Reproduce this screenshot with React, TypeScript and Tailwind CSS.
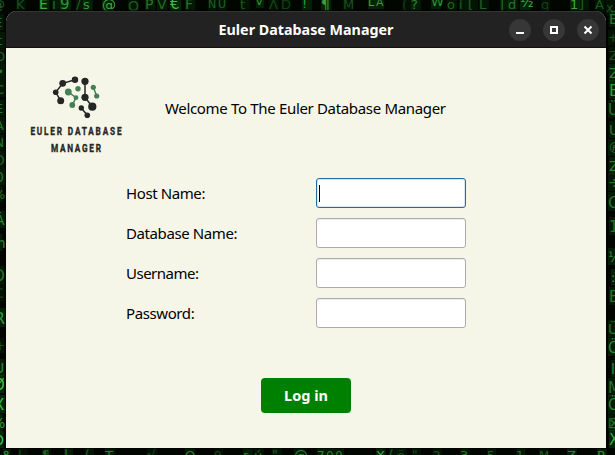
const wallpaper: [number, number, string, number, number][] = [
  // x, baseline, glyph, size, opacity
  [-8, 9, '@', 13, 0.5], [16, 9, 'K', 13, 0.4], [39, 9, 'E', 14, 0.95], [52, 9, 'i', 14, 0.55], [60, 9, '9', 15, 0.8],
  [76, 9, '/', 13, 0.5], [83, 9, 's', 13, 0.8], [102, 10, '@', 14, 0.9], [128, 11, 'O', 14, 0.45], [145, 9, 'P', 14, 0.6],
  [157, 9, 'V', 14, 0.55], [170, 9, '€', 15, 1], [185, 9, 'F', 14, 0.6], [208, 8, 'N', 11, 0.5], [218, 8, 'U', 11, 0.5], [240, 9, 't', 13, 0.45],
  [256, 5, 'v', 11, 0.8], [269, 9, 'Λ', 13, 0.35], [281, 9, 'D', 13, 0.3], [302, 8, '!', 13, 0.8], [321, 9, '¶', 14, 0.85], [343, 9, 'M', 13, 0.4],
  [368, 6, 'L', 11, 0.9], [376, 6, 'Ä', 11, 0.8], [402, 10, '(', 14, 0.3], [411, 9, '?', 13, 0.7], [431, 6, 'W', 13, 0.75], [447, 9, 'o', 13, 0.5],
  [459, 9, 'í', 13, 0.5], [468, 9, '[', 13, 0.5], [479, 9, 'L', 13, 0.5], [500, 9, '|', 13, 0.6], [508, 9, 'd', 13, 0.6], [520, 7, '½', 14, 0.9],
  [541, 9, 'q', 13, 0.3], [570, 9, '1', 13, 0.9], [579, 9, ']', 13, 0.5], [595, 9, 'Ã', 13, 0.45], [606, 12, 'x', 13, 0.4],
  [-6, 27, 'E', 13, 0.6], [-3, 45, 't', 13, 0.6], [-5, 61, 'O', 13, 0.5], [-3, 76, '•', 12, 0.6], [-4, 94, 'c', 15, 0.5], [-5, 113, 'E', 13, 0.6],
  [-5, 130, 'A', 13, 0.6], [-5, 147, 'N', 12, 0.6], [-6, 165, 'D', 14, 0.5], [-5, 182, '0', 14, 0.6], [-7, 199, '%', 13, 0.6], [-5, 225, 'Á', 14, 0.7],
  [-8, 248, 'm', 14, 0.7], [-7, 281, 'O', 15, 0.6], [-6, 298, 'C', 14, 0.3], [-6, 324, 'R', 16, 0.8], [-5, 350, '+', 12, 0.4], [-6, 373, 'U', 14, 0.7],
  [-7, 390, 'Ø', 15, 1], [-6, 410, 'X', 15, 1], [-8, 428, '%', 14, 0.8], [-7, 445, 'O', 14, 1],
  [609, 24, 'Ë', 14, 0.6], [608, 42, '+', 12, 0.4], [609, 60, 'Z', 13, 0.4], [609, 78, 'Z', 14, 0.7], [609, 96, 'E', 16, 0.8], [608, 115, 'Ü', 15, 0.6],
  [609, 135, 'U', 14, 0.6], [608, 153, '®', 14, 0.6], [609, 171, 'Z', 14, 0.7], [608, 188, '÷', 15, 0.6], [608, 208, 'Q', 16, 0.6], [609, 232, '1', 15, 0.6],
  [608, 262, '½', 14, 0.7], [611, 282, ':', 13, 0.8], [609, 302, 'E', 15, 0.6], [608, 334, 'Ü', 14, 0.6], [608, 353, 'Ö', 15, 0.7], [611, 374, 'l', 14, 0.7],
  [608, 393, 'M', 15, 0.6], [608, 410, 'Ö', 15, 0.7], [608, 428, '⊠', 15, 0.6], [609, 445, 'X', 15, 0.9],
  [3, 459, '8', 10, 0.8], [18, 460, 'l', 13, 0.35], [42, 459, '¶', 12, 0.5], [64, 459, '|', 12, 0.7], [85, 459, '(', 12, 0.5], [105, 460, 'T', 13, 0.7],
  [147, 460, '√', 14, 0.4], [185, 460, 'Q', 13, 0.65], [214, 460, '9', 12, 0.35], [243, 460, 'r', 13, 0.7], [254, 460, 'ú', 13, 0.5], [272, 459, '"', 13, 0.5],
  [294, 461, '@', 14, 0.7], [317, 460, '7', 12, 0.7], [326, 460, '0', 12, 0.65], [335, 460, '0', 12, 0.65], [376, 460, 'X', 13, 0.9], [389, 459, '(', 12, 0.5],
  [397, 460, 'ö', 13, 0.4], [412, 459, '"', 12, 0.4], [433, 460, '2', 12, 0.45], [460, 460, '3', 13, 0.6], [487, 460, '5', 12, 0.5], [516, 460, '1', 12, 0.6],
  [539, 460, 'M', 12, 0.45], [567, 460, 'Z', 13, 0.7], [597, 460, 'P', 13, 0.75],
];

function Wallpaper() {
  return (
    <svg className="absolute inset-0 h-[455px] w-[615px]" viewBox="0 0 615 455" aria-hidden="true">
      <rect width="615" height="455" fill="#010601" />
      {wallpaper.map(([x, y, glyph, size, opacity], i) => (
        <g key={i} fontFamily="'DejaVu Sans', sans-serif" fontSize={size} fill="#3cbc44" opacity={opacity}>
          <rect x={x} y={y - size} width={size * 0.75} height={size + 3} fill="#0c5a16" opacity="0.4" />
          <text x={x} y={y}>{glyph}</text>
        </g>
      ))}
    </svg>
  );
}

function Logo() {
  const dark = [
    [75, 79.7, 3.2], [62.7, 83.3, 3.4], [55.7, 92.3, 2.8], [60.7, 100.7, 3.5], [85, 81.3, 3.6],
    [85, 97.3, 3.6], [92.3, 106.7, 4.1], [81.3, 108, 2.7], [87.3, 115.3, 2.8],
  ];
  const green = [
    [68.3, 92, 3.4], [76, 97.7, 2.4], [72.3, 105, 2.9], [78, 88.7, 2.7], [93.3, 87.3, 2.6], [96.7, 96, 2.6],
  ];
  return (
    <svg className="ml-5 mt-[22px] h-[90px] w-[104px] shrink-0" viewBox="26 70 104 90">
      <g fill="none" strokeWidth="1.5">
        <path d="M75 79.7 62.7 83.3 55.7 92.3 60.7 100.7M85 81.3V97.3L92.3 106.7M81.3 108 87.3 115.3" stroke="#252726" />
        <path d="M68.3 92 76 97.7 72.3 105M93.3 87.3 96.7 96" stroke="#428057" />
      </g>
      {dark.map(([x, y, r]) => <circle key={`${x}-${y}`} cx={x} cy={y} r={r} fill="#252726" />)}
      {green.map(([x, y, r]) => <circle key={`${x}-${y}`} cx={x} cy={y} r={r} fill="#428057" />)}
      <g fontFamily="Roboto, sans-serif" fontWeight="700" fontSize="11.2" fill="#252726" stroke="#252726" strokeWidth="0.35" letterSpacing="2">
        <text transform="translate(30.4 135.3) scale(.735 1)" textLength="126">EULER DATABASE</text>
        <text transform="translate(51 152) scale(.735 1)" textLength="70">MANAGER</text>
      </g>
    </svg>
  );
}

function TitleButton({ kind }: { kind: 'minimize' | 'maximize' | 'close' }) {
  return (
    <button aria-label={kind} className="size-[22px] rounded-full bg-[#373737]">
      <svg viewBox="0 0 22 22" className="size-[22px]" fill="none" stroke="#fff" strokeWidth="2">
        {kind === 'minimize' && <path d="M7 14h8" />}
        {kind === 'maximize' && <rect x="8" y="8" width="6" height="6" />}
        {kind === 'close' && <path d="m7.5 7.5 7 7m0-7-7 7" />}
      </svg>
    </button>
  );
}

const fields = [
  { label: 'Host Name:', tracking: 'tracking-[-0.4px]' },
  { label: 'Database Name:', tracking: 'tracking-[-0.4px]' },
  { label: 'Username:', tracking: 'tracking-[-0.5px]' },
  { label: 'Password:', tracking: 'tracking-[-0.4px]' },
];

export default function App() {
  return (
    <div className="relative h-[455px] w-[615px] overflow-hidden bg-black font-['Noto_Sans','Open_Sans',sans-serif] text-[15px] text-black">
      <Wallpaper />
      <main className="absolute left-[6px] top-[11px] flex h-[437px] w-[600px] flex-col overflow-hidden rounded-t-[11px] bg-[#f6f6e8] shadow-[0_0_1px_1px_rgba(0,0,0,.7)]">
        <header className="grid h-[37px] shrink-0 grid-cols-[1fr_auto_1fr] items-center border-b border-[#180d10] border-t border-t-[#353535] bg-[#222] pr-[7px]">
          <span />
          <h1 className="ml-[7px] text-[14.3px] font-bold leading-5 text-white">Euler Database Manager</h1>
          <div className="flex justify-end gap-3">
            <TitleButton kind="minimize" />
            <TitleButton kind="maximize" />
            <TitleButton kind="close" />
          </div>
        </header>
        <div className="flex h-[130px] shrink-0">
          <Logo />
          <p className="ml-[35px] mt-[49px] whitespace-nowrap leading-[22px] tracking-[-0.33px]">Welcome To The Euler Database Manager</p>
        </div>
        <form className="flex flex-col px-[120px]">
          <div className="flex flex-col gap-[10px]">
            {fields.map(({ label, tracking }, i) => (
              <label key={label} className="flex h-[30px] items-center">
                <span className={`w-[190px] ${tracking}`}>{label}</span>
                <span className={i === 0
                  ? 'flex h-[30px] w-[150px] items-center rounded-[3px] border border-[#1c6fa5] bg-white pl-[2px] shadow-[inset_0_0_0_1px_#d7e6f0]'
                  : 'h-[30px] w-[150px] rounded-[3px] border border-[#ababab] bg-white shadow-[inset_0_1px_0_#ececec]'}>
                  {i === 0 && <span className="h-[17px] w-px bg-black" />}
                </span>
              </label>
            ))}
          </div>
          <button type="button" className="ml-[135px] mt-[50px] h-[35px] w-[90px] rounded bg-[#008000] text-[14.5px] font-bold text-white">Log in</button>
        </form>
      </main>
    </div>
  );
}
